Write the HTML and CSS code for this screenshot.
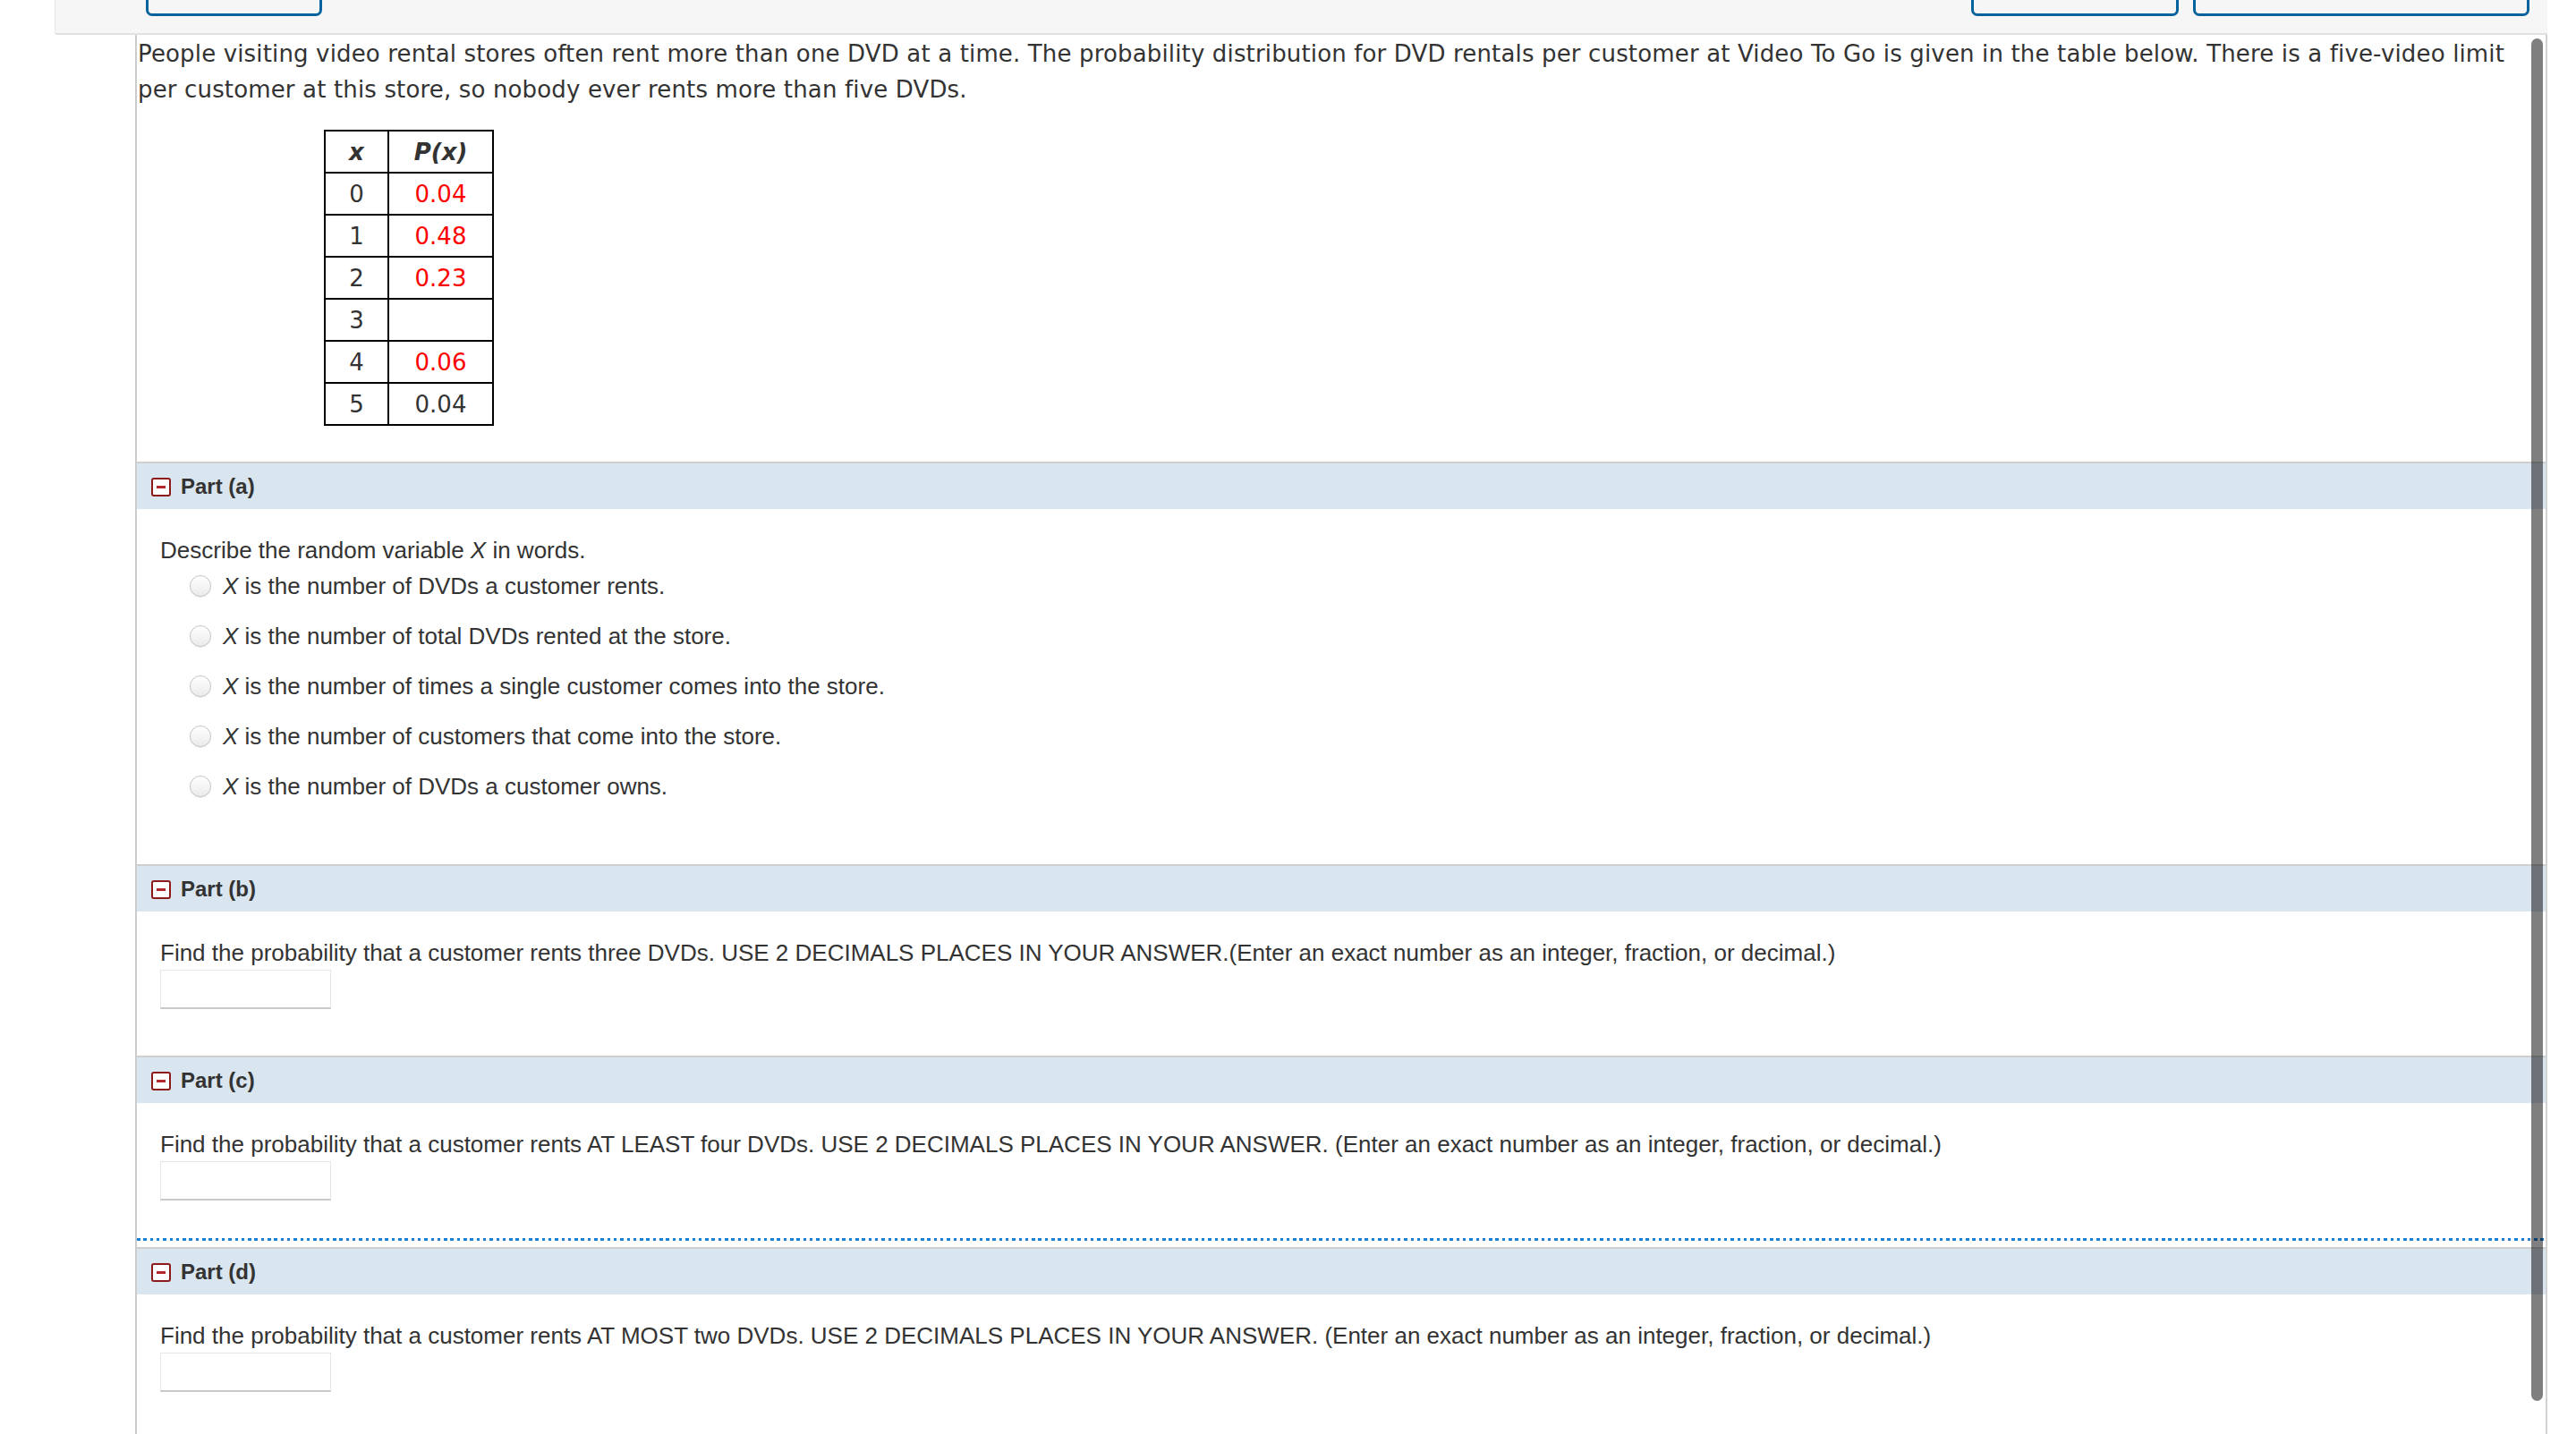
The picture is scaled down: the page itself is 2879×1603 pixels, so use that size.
FILE: index.html
```html
<!DOCTYPE html>
<html lang="en">
<head>
<meta charset="utf-8">
<title>Video To Go DVD rentals</title>
<link rel="stylesheet" href="styles.css">
</head>
<body>
<div class="topbar">
  <div class="btn btn-a"></div>
  <div class="spacer"></div>
  <div class="btn btn-b"></div>
  <div class="btn btn-c"></div>
</div>
<div class="page">
  <div class="question">
    <p class="intro">People visiting video rental stores often rent more than one DVD at a time. The probability distribution for DVD rentals per customer at Video To Go is given in the table below. There is a five-video limit per customer at this store, so nobody ever rents more than five DVDs.</p>
    <table class="dist">
      <tr><th class="c1">x</th><th class="c2">P(x)</th></tr>
      <tr><td class="c1">0</td><td class="c2 red">0.04</td></tr>
      <tr><td class="c1">1</td><td class="c2 red">0.48</td></tr>
      <tr><td class="c1">2</td><td class="c2 red">0.23</td></tr>
      <tr><td class="c1">3</td><td class="c2"></td></tr>
      <tr><td class="c1">4</td><td class="c2 red">0.06</td></tr>
      <tr><td class="c1">5</td><td class="c2">0.04</td></tr>
    </table>
  </div>

  <section class="part part-a">
    <div class="part-head"><span class="toggle"></span>Part (a)</div>
    <div class="part-body">
      <div class="line">Describe the random variable <i>X</i> in words.</div>
      <div class="options">
        <label class="option"><input class="radio" type="radio" name="pa"><span><i>X</i> is the number of DVDs a customer rents.</span></label>
        <label class="option"><input class="radio" type="radio" name="pa"><span><i>X</i> is the number of total DVDs rented at the store.</span></label>
        <label class="option"><input class="radio" type="radio" name="pa"><span><i>X</i> is the number of times a single customer comes into the store.</span></label>
        <label class="option"><input class="radio" type="radio" name="pa"><span><i>X</i> is the number of customers that come into the store.</span></label>
        <label class="option"><input class="radio" type="radio" name="pa"><span><i>X</i> is the number of DVDs a customer owns.</span></label>
      </div>
    </div>
  </section>

  <section class="part part-b">
    <div class="part-head"><span class="toggle"></span>Part (b)</div>
    <div class="part-body">
      <div class="line">Find the probability that a customer rents three DVDs. USE 2 DECIMALS PLACES IN YOUR ANSWER.(Enter an exact number as an integer, fraction, or decimal.)</div>
      <input class="answer" type="text">
    </div>
  </section>

  <section class="part part-c">
    <div class="part-head"><span class="toggle"></span>Part (c)</div>
    <div class="part-body">
      <div class="line">Find the probability that a customer rents AT LEAST four DVDs. USE 2 DECIMALS PLACES IN YOUR ANSWER. (Enter an exact number as an integer, fraction, or decimal.)</div>
      <input class="answer" type="text">
    </div>
  </section>
  <div class="dots"></div>

  <section class="part part-d">
    <div class="part-head"><span class="toggle"></span>Part (d)</div>
    <div class="part-body">
      <div class="line">Find the probability that a customer rents AT MOST two DVDs. USE 2 DECIMALS PLACES IN YOUR ANSWER. (Enter an exact number as an integer, fraction, or decimal.)</div>
      <input class="answer" type="text">
    </div>
  </section>
</div>
<div class="scrollbar"></div>
</body>
</html>
```
FILE: styles.css
```css
* { box-sizing: border-box; }
html, body { margin: 0; padding: 0; background: #fff; }
body {
  width: 2879px;
  height: 1603px;
  overflow: hidden;
  position: relative;
  font-family: "Liberation Sans", Arial, sans-serif;
  color: #333;
}

/* top toolbar */
.topbar {
  margin-left: 61px;
  width: 2786px;
  height: 39px;
  background: #f6f6f6;
  border-bottom: 2px solid #e1e1e1;
  border-left: 1px solid #e6e6e6;
  border-bottom-left-radius: 3px;
  display: flex;
  align-items: flex-start;
  padding-right: 20px;
  overflow: hidden;
}
.btn {
  height: 40px;
  margin-top: -22px;
  border: 3px solid #04629c;
  border-radius: 7px;
  flex: none;
}
.btn-a { width: 197px; margin-left: 101px; }
.spacer { flex: 1; }
.btn-b { width: 232px; }
.btn-c { width: 376px; margin-left: 16px; }

/* page */
.page {
  margin-left: 151px;
  width: 2696px;
  height: 1564px;
  border-left: 2px solid #cdcdcd;
  border-right: 2px solid #d2d2d2;
}
.intro {
  margin: 0;
  padding: 1px 20px 0 1px;
  font-family: "DejaVu Sans", Verdana, sans-serif;
  font-size: 26px;
  letter-spacing: 0.15px;
  line-height: 40px;
  color: #333;
}
.dist {
  margin: 25px 0 40px 209px;
  border-collapse: separate;
  border-spacing: 0;
  border-top: 2px solid #000;
  border-left: 2px solid #000;
  font-family: "DejaVu Sans", Verdana, sans-serif;
  font-size: 26px;
  color: #333;
}
.dist th, .dist td {
  height: 47px;
  padding: 0;
  border-right: 2px solid #000;
  border-bottom: 2px solid #000;
  text-align: center;
  vertical-align: middle;
  font-weight: normal;
}
.dist th { font-weight: bold; font-style: italic; }
.dist .c1 { width: 71px; }
.dist .c2 { width: 117px; }
.dist .red { color: #ff0000; }

/* parts */
.part { border-top: 2px solid #cfcfcf; }
.part-head {
  height: 51px;
  background: #d9e5ef;
  display: flex;
  align-items: center;
  padding-left: 16px;
  padding-top: 1px;
  font-weight: bold;
  font-size: 24px;
  color: #333;
}
.toggle {
  width: 22px;
  height: 21px;
  margin-right: 11px;
  border: 2px solid #8e1b1b;
  border-radius: 3px;
  background: #fff;
  display: flex;
  align-items: center;
  justify-content: center;
  flex: none;
}
.toggle::before {
  content: "";
  width: 10px;
  height: 3px;
  background: #b3262a;
}
.part-body {
  padding: 31px 0 52px 26px;
  font-size: 26px;
  line-height: 30px;
  color: #333;
}
.part-a .part-body { padding-top: 31px; padding-bottom: 72px; }
.part-c .part-body { padding-bottom: 42px; }
.part-d { margin-top: 7px; }

.options {
  margin-top: 10px;
  padding-left: 33px;
  display: flex;
  flex-direction: column;
  gap: 26px;
}
.option {
  display: flex;
  align-items: center;
  height: 30px;
}
.radio {
  appearance: none;
  -webkit-appearance: none;
  width: 24px;
  height: 24px;
  margin: 0 13px 0 0;
  border: 1px solid #c4c4c4;
  border-radius: 50%;
  background: linear-gradient(#ffffff, #ebebeb);
  box-shadow: 0 1px 1px rgba(0,0,0,0.1);
  flex: none;
}
.answer {
  display: block;
  margin: 4px 0 0 0;
  width: 191px;
  height: 44px;
  border: 1px solid #e6e6e6;
  border-bottom: 2px solid #c9c9c9;
  background: #fff;
  padding: 0;
}
.dots {
  height: 3px;
  background: repeating-linear-gradient(to right, #1b7fd6 0, #1b7fd6 3.5px, transparent 3.5px, transparent 7.3px);
}

.scrollbar {
  position: absolute;
  left: 2829px;
  top: 43px;
  width: 13px;
  height: 1523px;
  border-radius: 7px;
  background: rgba(0,0,0,0.5);
}
```
